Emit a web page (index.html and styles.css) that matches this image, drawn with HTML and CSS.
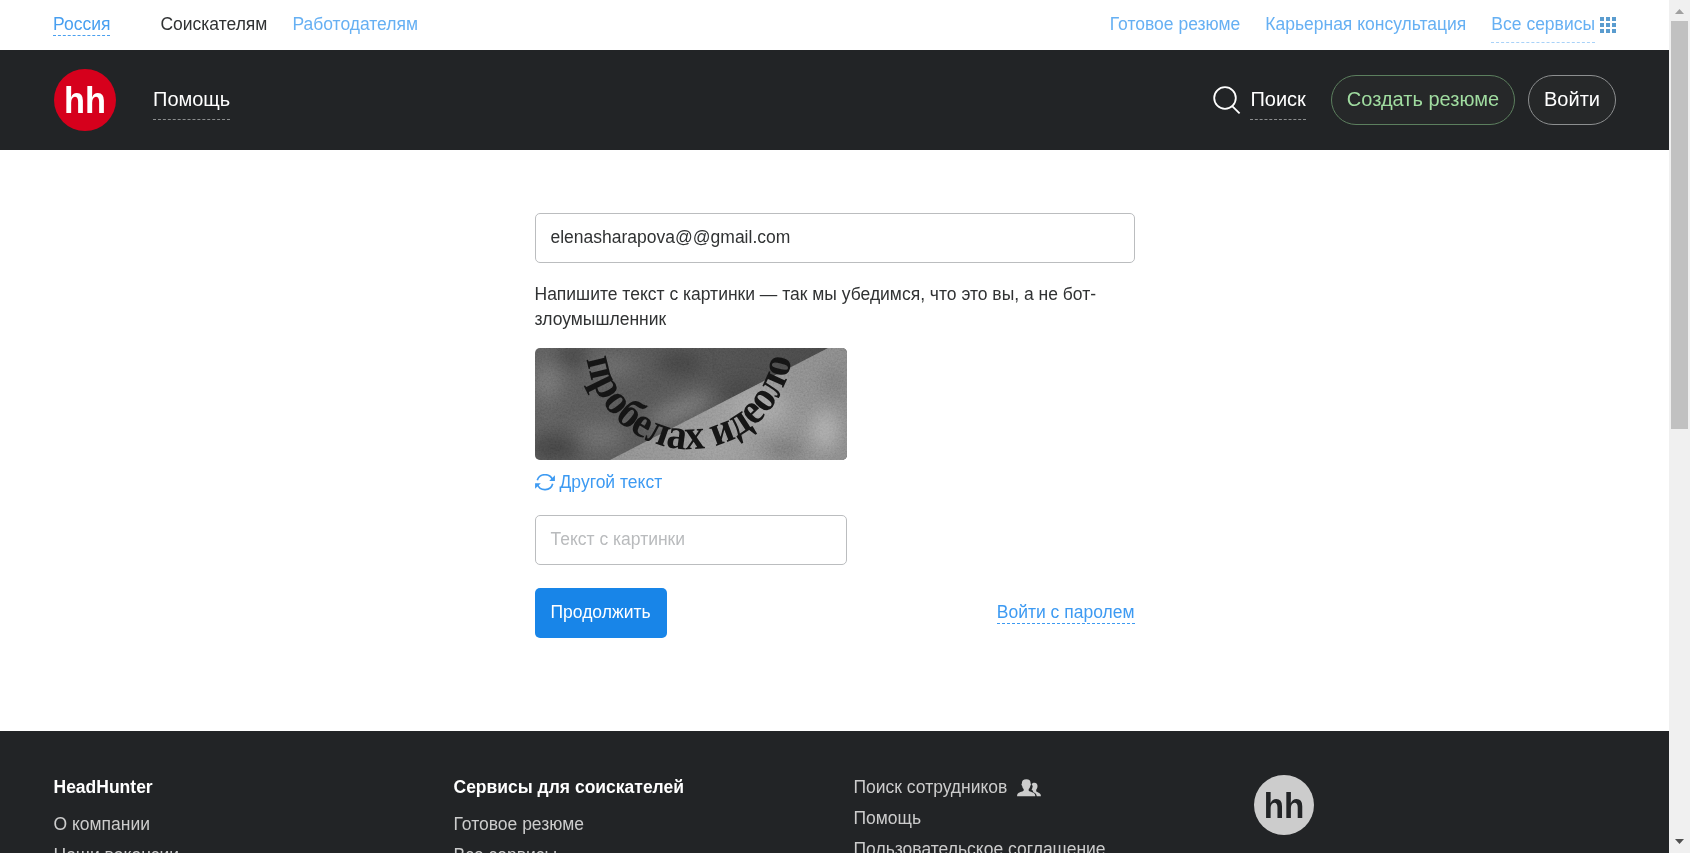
FILE: index.html
```html
<!DOCTYPE html>
<html lang="ru">
<head>
<meta charset="utf-8">
<title>Вход</title>
<link rel="stylesheet" href="styles.css">
</head>
<body>
<div class="window">
  <div class="page">
    <nav class="topbar">
      <a class="region">Россия</a>
      <a class="top-current">Соискателям</a>
      <a class="top-link">Работодателям</a>
      <div class="topbar-right">
        <a class="top-link">Готовое резюме</a>
        <a class="top-link">Карьерная консультация</a>
        <div class="services">
          <a class="top-link top-link-dashed">Все сервисы</a>
          <svg class="grid-icon" width="16" height="16" viewBox="0 0 16 16" fill="#5a9ccf"><path d="M0 0h4v4H0zM6 0h4v4H6zM12 0h4v4h-4zM0 6h4v4H0zM6 6h4v4H6zM12 6h4v4h-4zM0 12h4v4H0zM6 12h4v4H6zM12 12h4v4h-4z"/></svg>
        </div>
      </div>
    </nav>
    <header class="header">
      <svg class="logo" width="62" height="62" viewBox="0 0 62 62"><circle cx="31" cy="31" r="31" fill="#d6001c"/><text class="logo-text" x="10" y="44.300" textLength="42" lengthAdjust="spacingAndGlyphs" fill="#fff">hh</text></svg>
      <a class="nav-link">Помощь</a>
      <div class="header-right">
        <svg class="search-icon" width="28" height="28" viewBox="0 0 28 28" fill="none" stroke="#fff" stroke-width="1.8"><circle cx="12" cy="12" r="10.8"/><path d="M19.2 20.2l7.4 7.2"/></svg>
        <a class="nav-link nav-search">Поиск</a>
        <a class="pill pill-green">Создать резюме</a>
        <a class="pill">Войти</a>
      </div>
    </header>
    <main class="main">
      <form class="login">
        <div class="field">elenasharapova@@gmail.com</div>
        <p class="hint">Напишите текст с картинки — так мы убедимся, что это вы, а не бот-злоумышленник</p>
        <svg class="captcha" width="312" height="112" viewBox="0 0 312 112">
          <defs>
            <linearGradient id="dark" x1="0" y1="0" x2="1" y2="0"><stop offset="0" stop-color="#5a5a5a"/><stop offset=".45" stop-color="#505050"/><stop offset="1" stop-color="#424242"/></linearGradient>
            <linearGradient id="light" x1="0" y1="0" x2="1" y2="0"><stop offset="0" stop-color="#7e7e7e"/><stop offset=".6" stop-color="#929292"/><stop offset="1" stop-color="#808080"/></linearGradient>
            <filter id="soft" x="-50%" y="-50%" width="200%" height="200%"><feGaussianBlur stdDeviation="9"/></filter>
            <filter id="grain" x="0" y="0" width="100%" height="100%"><feTurbulence type="fractalNoise" baseFrequency=".55" numOctaves="2" seed="4"/><feColorMatrix type="saturate" values="0"/><feComponentTransfer><feFuncA type="linear" slope="0" intercept="1"/></feComponentTransfer></filter>
            <clipPath id="lit"><path d="M75 112L293 0H312V112Z"/></clipPath>
            <path id="arc" d="M51.8 11A103 103 0 0 0 256.200 11"/>
          </defs>
          <rect width="312" height="112" fill="url(#dark)"/>
          <g filter="url(#soft)">
            <ellipse cx="12" cy="34" rx="14" ry="18" fill="#707070"/>
            <ellipse cx="78" cy="18" rx="24" ry="10" fill="#666"/>
            <ellipse cx="145" cy="62" rx="35" ry="10" transform="rotate(-25 145 62)" fill="#737373"/>
            <ellipse cx="65" cy="88" rx="24" ry="12" fill="#686868"/>
            <ellipse cx="20" cy="100" rx="28" ry="14" fill="#404040"/>
            <ellipse cx="38" cy="8" rx="16" ry="10" fill="#3c3c3c"/>
            <ellipse cx="145" cy="15" rx="22" ry="10" fill="#3c3c3c"/>
            <ellipse cx="210" cy="42" rx="24" ry="8" fill="#3e3e3e"/>
          </g>
          <g clip-path="url(#lit)">
            <rect width="312" height="112" fill="url(#light)"/>
            <g filter="url(#soft)">
              <ellipse cx="225" cy="60" rx="28" ry="18" fill="#a0a0a0"/>
              <ellipse cx="290" cy="82" rx="14" ry="20" fill="#a8a8a8"/>
              <ellipse cx="180" cy="100" rx="30" ry="10" fill="#989898"/>
              <ellipse cx="250" cy="102" rx="22" ry="10" fill="#6e6e6e"/>
              <ellipse cx="300" cy="35" rx="14" ry="16" fill="#767676"/>
            </g>
          </g>
          <text class="captcha-text"><textPath href="#arc" textLength="298" lengthAdjust="spacingAndGlyphs">пробелах идеоло</textPath></text>
          <rect class="captcha-grain" width="312" height="112" filter="url(#grain)"/>
        </svg>
        <a class="refresh">
          <svg width="20" height="17" viewBox="0 0 20 17" fill="none" stroke="#3d9af2" stroke-width="1.6"><path d="M2.300 6.200A8 7.700 0 0 1 17.600 6M17.700 9.800A8 7.700 0 0 1 2.400 10.500"/><path d="M19.900 1.200V7h-5.700zM.1 14.800V9.300h5.700z" fill="#3d9af2" stroke="none"/></svg>
          <span>Другой текст</span>
        </a>
        <div class="field field-captcha">Текст с картинки</div>
        <div class="actions">
          <a class="submit">Продолжить</a>
          <a class="password-link">Войти с паролем</a>
        </div>
      </form>
    </main>
    <footer class="footer">
      <div class="footer-col"><b>HeadHunter</b><a>О компании</a><a>Наши вакансии</a></div>
      <div class="footer-col"><b>Сервисы для соискателей</b><a>Готовое резюме</a><a>Все сервисы</a></div>
      <div class="footer-col">
        <a class="employees">Поиск сотрудников <svg width="24" height="18" viewBox="0 0 24 18" fill="#ccc"><path d="M14.600 5.200C15 4.200 16.100 3.700 17.300 3.700c2.200 0 3.400 1.500 3.200 3.600-.1 1.700-.6 2.600-1.300 3.500v1.500c0 .7 3.500 1.300 4.300 3 .3.600.4 1.400.4 2h-4.100c-.4-2.300-1.600-3.400-3.800-4.300.6-1.100-.3-1.500-1.500-2 .5-1 .8-1.600.9-2.400.6-1.200.2-2.100-.8-3.400z"/><path d="M9.300.2c2.900 0 4.600 1.500 4.300 4.400.6.500.4 1.700-.3 2.300-.3 1.600-.7 2.300-1.600 3.100v1.600c.3 1.100 4.300 1.500 5.600 2.900.7.700 1 1.800 1 2.800H.1c0-1.300.2-2.300 1.100-3 1.400-1.200 5.100-1.700 5.500-2.700V10c-.9-.8-1.300-1.500-1.500-3.100-.8-.6-1-1.800-.3-2.300C4.600 1.700 6.400.2 9.300.2z"/></svg></a>
        <a>Помощь</a><a>Пользовательское соглашение</a>
      </div>
      <svg class="footer-logo" width="60" height="60" viewBox="0 0 62 62"><circle cx="31" cy="31" r="31" fill="#ccc"/><text class="logo-text" x="10" y="44.300" textLength="42" lengthAdjust="spacingAndGlyphs" fill="#222426">hh</text></svg>
    </footer>
  </div>
  <div class="scrollbar">
    <svg width="9" height="5" viewBox="0 0 9 5" fill="#a0a0a0"><path d="M4.500 0L9 5H0z"/></svg>
    <div class="thumb"></div>
    <svg class="arrow-down" width="9" height="5" viewBox="0 0 9 5" fill="#505050"><path d="M0 0h9L4.500 5z"/></svg>
  </div>
</div>
</body>
</html>
```

FILE: styles.css
```css
* { box-sizing: border-box; }
body {
  margin: 0;
  background: #fff;
  color: #303233;
  font: 17.5px/25px "Liberation Sans", Arial, sans-serif;
  overflow: hidden;
}
.window { display: flex; width: 1690px; height: 853px; overflow: hidden; }
.page { width: 1669px; height: 853px; overflow: hidden; display: flex; flex-direction: column; }
a { white-space: nowrap; }

.topbar { display: flex; align-items: center; flex: none; height: 50px; padding: 0 53px; }
.topbar-right { display: flex; align-items: center; gap: 25px; margin-left: auto; }
.region { color: #489ff0; border-bottom: 1px dashed #489ff0; line-height: 21px; margin: 0 50px 0 0; }
.top-current { margin: -2px 25px 0 0; }
.top-link { color: #66b0f3; margin-top: -2px; }
.services { display: flex; align-items: center; gap: 5px; }
.top-link-dashed { padding: 7px 0 6px; border-bottom: 1px dashed #a9d2f8; margin-top: -2px; height: 38px; }

.header { display: flex; align-items: center; flex: none; height: 100px; padding: 0 53px 0 54px; background: #222426; color: #fff; font-size: 20px; }
.logo-text { font: bold 37px "Liberation Sans", Arial, sans-serif; }
.nav-link { height: 40px; margin: 0 0 0 37px; padding-top: 7px; border-bottom: 1px dashed #8b8d8e; }
.header-right { display: flex; align-items: center; margin-left: auto; }
.nav-search { margin: 0 25px 0 9px; }
.pill { height: 50px; padding: 11px 15px; border: 1px solid #8d8f90; border-radius: 25px; background: #262829; }
.pill-green { margin-right: 13px; color: #a0dca0; border-color: #5c7f5e; }

.main { flex: none; height: 581px; padding-top: 63px; }
.login { display: flex; flex-direction: column; width: 600px; margin: 0 auto; }
.field { height: 50px; padding: 11px 15px; border: 1px solid #bbbdbf; border-radius: 5px; background: #fff; }
.field-captcha { width: 312px; margin-top: 20px; color: #b9bbbd; }
.hint { margin: 19px 0 16px; }
.captcha { display: block; border-radius: 5px; }
.captcha-text { font: bold 43px "Liberation Serif", "Times New Roman", serif; fill: #131313; }
.captcha-grain { opacity: .22; mix-blend-mode: overlay; }
.refresh { display: flex; align-items: center; gap: 5px; margin-top: 10px; color: #3d9af2; }
.actions { display: flex; align-items: center; justify-content: space-between; margin-top: 23px; }
.submit { height: 50px; padding: 12px 16px; border-radius: 5px; background: #1885e8; color: #fff; }
.password-link { color: #3d9af2; line-height: 21px; border-bottom: 1px dashed #3d9af2; }

.footer { display: grid; grid-template-columns: repeat(4, 400px); flex: none; height: 250px; padding: 44px 0 0 53.5px; background: #222426; color: #ccc; }
.footer-col { display: flex; flex-direction: column; gap: 6px; }
.footer-col b { color: #fff; margin-bottom: 6px; }
.employees { display: flex; align-items: center; gap: 10px; }

.scrollbar { display: flex; flex-direction: column; align-items: center; width: 21px; height: 853px; padding: 9px 0; background: #f0f0f0; }
.thumb { width: 17px; height: 408px; margin-top: 7px; background: #c1c1c1; }
.arrow-down { margin-top: auto; }
```
